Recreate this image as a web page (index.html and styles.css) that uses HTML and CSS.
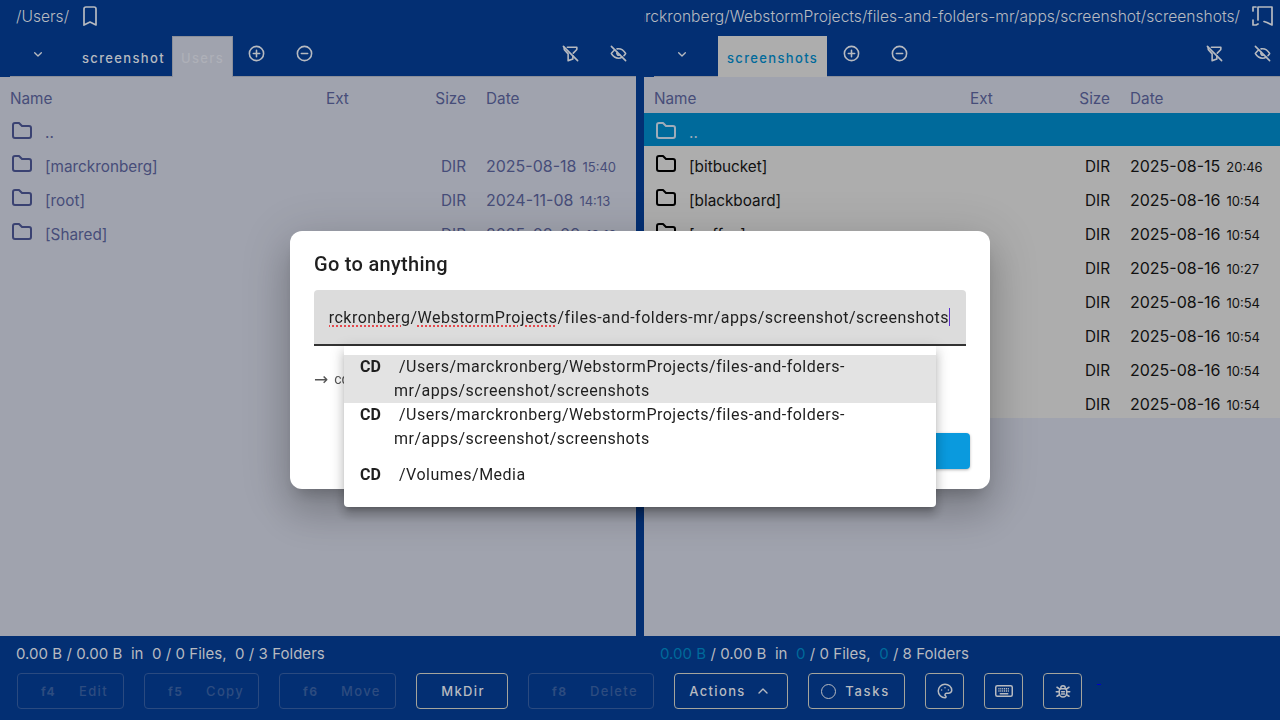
FILE: index.html
```html
<!DOCTYPE html>
<html>
<head>
<meta charset="utf-8">
<title>Go to anything</title>
<link rel="stylesheet" href="styles.css">
</head>
<body>
<svg class="sprite" width="0" height="0">
	<symbol id="folder" viewBox="0 0 24 24"><path d="M5 4h4l3 3h7a2 2 0 0 1 2 2v8a2 2 0 0 1-2 2h-14a2 2 0 0 1-2-2v-11a2 2 0 0 1 2-2"/></symbol>
	<symbol id="bookmark" viewBox="0 0 24 24"><path d="M6 5a2 2 0 0 1 2-2h8a2 2 0 0 1 2 2v16l-6-3-6 3z"/></symbol>
	<symbol id="bookmark-dash" viewBox="0 0 24 24"><path d="M2 7v-4h3M2 16v5h3l2-1"/><path d="M7 16v-13h14v18l-5-2.500-3-1"/></symbol>
	<symbol id="chevron-down" viewBox="0 0 24 24"><path d="M7 10l5 5 5-5"/></symbol>
	<symbol id="chevron-up" viewBox="0 0 24 24"><path d="M6 15l6-6 6 6"/></symbol>
	<symbol id="plus" viewBox="0 0 24 24"><circle cx="12" cy="12" r="9"/><path d="M8 12h8M12 8v8"/></symbol>
	<symbol id="minus" viewBox="0 0 24 24"><circle cx="12" cy="12" r="9"/><path d="M8 12h8"/></symbol>
	<symbol id="filter-off" viewBox="0 0 24 24"><path d="M8 4h12v2.172a2 2 0 0 1-.586 1.414l-3.914 3.914m-.5 3.500v4l-6 2v-8.500l-4.480-4.928a2 2 0 0 1-.520-1.345v-2.227"/><path d="M3 3l18 18"/></symbol>
	<symbol id="eye-off" viewBox="0 0 24 24"><path d="M10.585 10.587a2 2 0 0 0 2.829 2.828"/><path d="M16.681 16.673a8.717 8.717 0 0 1-4.681 1.327c-3.600 0-6.600-2-9-6 1.272-2.120 2.712-3.678 4.320-4.674m2.860-1.146a9.055 9.055 0 0 1 1.820-.180c3.600 0 6.600 2 9 6-.666 1.110-1.379 2.067-2.138 2.870"/><path d="M3 3l18 18"/></symbol>
	<symbol id="palette" viewBox="0 0 24 24"><path d="M12 21a9 9 0 0 1 0-18c4.970 0 9 3.582 9 8 0 1.060-.474 2.078-1.318 2.828-.844.750-1.989 1.172-3.182 1.172h-2.500a2 2 0 0 0-1 3.750 1.300 1.300 0 0 1-1 2.250"/><path d="M7.500 10.500v.01M12 7.500v.01M16.500 10.500v.01"/></symbol>
	<symbol id="keyboard" viewBox="0 0 24 24"><rect x="1" y="5" width="22" height="14" rx="2"/><path class="keys" d="M4.500 9h15M4.500 12h15"/><path d="M7 15.500h10"/></symbol>
	<symbol id="bug" viewBox="0 0 24 24"><path d="M9 9v-1a3 3 0 0 1 6 0v1"/><path d="M8 9h8a6 6 0 0 1 1 3v3a5 5 0 0 1-10 0v-3a6 6 0 0 1 1-3"/><path d="M3 13h4M17 13h4M10 13h4M10 16h4M4 19l3.350-2M20 19l-3.350-2M4 7l3.750 2.400M20 7l-3.750 2.400"/></symbol>
</svg>

<div class="panels">
	<section class="panel">
		<div class="path-row">
			<span class="path">/Users/</span>
			<svg class="icon bookmark"><use href="#bookmark"/></svg>
		</div>
		<div class="tab-row">
			<button class="tab-menu"><svg class="icon small"><use href="#chevron-down"/></svg></button>
			<span class="tab first">screenshot</span>
			<span class="tab active">Users</span>
			<button class="icon-btn"><svg class="icon"><use href="#plus"/></svg></button>
			<button class="icon-btn"><svg class="icon"><use href="#minus"/></svg></button>
			<span class="spacer"></span>
			<button class="icon-btn"><svg class="icon"><use href="#filter-off"/></svg></button>
			<button class="icon-btn last"><svg class="icon"><use href="#eye-off"/></svg></button>
		</div>
		<div class="table">
			<div class="row head"><span>Name</span><span>Ext</span><span class="size">Size</span><span class="date">Date</span></div>
			<div class="row up"><span class="name"><svg class="folder"><use href="#folder"/></svg>..</span></div>
			<div class="row"><span class="name"><svg class="folder"><use href="#folder"/></svg>[marckronberg]</span><span></span><span class="size">DIR</span><span class="date">2025-08-18<small>15:40</small></span></div>
			<div class="row"><span class="name"><svg class="folder"><use href="#folder"/></svg>[root]</span><span></span><span class="size">DIR</span><span class="date">2024-11-08<small>14:13</small></span></div>
			<div class="row"><span class="name"><svg class="folder"><use href="#folder"/></svg>[Shared]</span><span></span><span class="size">DIR</span><span class="date">2025-08-09<small>13:12</small></span></div>
		</div>
	</section>

	<section class="panel focused">
		<div class="path-row">
			<span class="path clip">/Users/marckronberg/WebstormProjects/files-and-folders-mr/apps/screenshot/screenshots/</span>
			<svg class="icon bookmark"><use href="#bookmark-dash"/></svg>
		</div>
		<div class="tab-row">
			<button class="tab-menu"><svg class="icon small"><use href="#chevron-down"/></svg></button>
			<span class="tab active">screenshots</span>
			<button class="icon-btn"><svg class="icon"><use href="#plus"/></svg></button>
			<button class="icon-btn"><svg class="icon"><use href="#minus"/></svg></button>
			<span class="spacer"></span>
			<button class="icon-btn"><svg class="icon"><use href="#filter-off"/></svg></button>
			<button class="icon-btn last"><svg class="icon"><use href="#eye-off"/></svg></button>
		</div>
		<div class="table">
			<div class="row head"><span>Name</span><span>Ext</span><span class="size">Size</span><span class="date">Date</span></div>
			<div class="row up cursor"><span class="name"><svg class="folder"><use href="#folder"/></svg>..</span></div>
			<div class="row"><span class="name"><svg class="folder"><use href="#folder"/></svg>[bitbucket]</span><span></span><span class="size">DIR</span><span class="date">2025-08-15<small>20:46</small></span></div>
			<div class="row"><span class="name"><svg class="folder"><use href="#folder"/></svg>[blackboard]</span><span></span><span class="size">DIR</span><span class="date">2025-08-16<small>10:54</small></span></div>
			<div class="row"><span class="name"><svg class="folder"><use href="#folder"/></svg>[coffee]</span><span></span><span class="size">DIR</span><span class="date">2025-08-16<small>10:54</small></span></div>
			<div class="row"><span class="name"></span><span></span><span class="size">DIR</span><span class="date">2025-08-16<small>10:27</small></span></div>
			<div class="row"><span class="name"></span><span></span><span class="size">DIR</span><span class="date">2025-08-16<small>10:54</small></span></div>
			<div class="row"><span class="name"></span><span></span><span class="size">DIR</span><span class="date">2025-08-16<small>10:54</small></span></div>
			<div class="row"><span class="name"></span><span></span><span class="size">DIR</span><span class="date">2025-08-16<small>10:54</small></span></div>
			<div class="row"><span class="name"></span><span></span><span class="size">DIR</span><span class="date">2025-08-16<small>10:54</small></span></div>
		</div>
	</section>
</div>

<div class="status">
	<div class="status-cell">0.00 B / 0.00 B &nbsp;in &nbsp;0 / 0 Files, &nbsp;0 / 3 Folders</div>
	<div class="status-cell"><em>0.00 B</em> / 0.00 B &nbsp;in &nbsp;<em>0</em> / 0 Files, &nbsp;<em>0</em> / 8 Folders</div>
</div>

<div class="buttons">
	<button class="btn off w-edit"><kbd>f4</kbd>Edit</button>
	<button class="btn off w-copy"><kbd>f5</kbd>Copy</button>
	<button class="btn off w-move"><kbd>f6</kbd>Move</button>
	<button class="btn w-mkdir">MkDir</button>
	<button class="btn off w-delete"><kbd>f8</kbd>Delete</button>
	<button class="btn w-actions">Actions<svg class="icon small up-arrow"><use href="#chevron-up"/></svg></button>
	<button class="btn w-tasks"><i class="ring"></i>Tasks</button>
	<button class="btn square"><svg class="icon tool"><use href="#palette"/></svg></button>
	<button class="btn square"><svg class="icon tool"><use href="#keyboard"/></svg></button>
	<button class="btn square"><svg class="icon tool"><use href="#bug"/></svg></button>
	<span class="stray"></span>
</div>

<div class="backdrop">
	<div class="dialog">
		<h2>Go to anything</h2>
		<div class="input">
			<div class="input-clip">
				<span class="input-text">/Users/ma<u>rckronberg</u>/<u>WebstormProjects</u>/files-and-folders-mr/apps/screenshot/screenshots</span><i class="caret"></i>
			</div>
		</div>
		<div class="hint"><span class="arrow">→</span> cd</div>
		<div class="actions"><button class="go">Go</button></div>
		<ul class="menu">
			<li class="hover"><b>CD</b>/Users/marckronberg/WebstormProjects/files-and-folders-mr/apps/screenshot/screenshots</li>
			<li><b>CD</b>/Users/marckronberg/WebstormProjects/files-and-folders-mr/apps/screenshot/screenshots</li>
			<li class="single"><b>CD</b>/Volumes/Media</li>
		</ul>
	</div>
</div>
</body>
</html>
```

FILE: styles.css
```css
* {
	box-sizing: border-box;
}

html, body {
	height: 100%;
}

body {
	margin: 0;
	overflow: hidden;
	background-color: #032f73;
	color: #b7bac0;
	font-family: Inter, "Liberation Sans", sans-serif;
	font-size: 16px;
	display: flex;
	flex-direction: column;
}

button {
	font-family: inherit;
	color: inherit;
	background: none;
	border: none;
	padding: 0;
}

.sprite {
	position: absolute;
}

.icon, .folder {
	fill: none;
	stroke: currentColor;
	stroke-width: 2;
	stroke-linecap: round;
	stroke-linejoin: round;
}

.keys {
	stroke-dasharray: 1.5 1;
	stroke-linecap: butt;
}

.icon {
	width: 19px;
	height: 19px;
	display: block;
}

.icon.small {
	width: 16px;
	height: 16px;
}

/* panels */
.panels {
	height: 636px;
	display: flex;
	gap: 8px;
}

.panel {
	flex: 1;
	min-width: 0;
	display: flex;
	flex-direction: column;
	overflow: hidden;
}

.path-row {
	height: 36px;
	padding: 0 8px 4px 16px;
	display: flex;
	align-items: center;
	gap: 9px;
}

.path {
	font-size: 15.6px;
	font-weight: 300;
	white-space: nowrap;
}

.path.clip {
	flex: 1;
	min-width: 0;
	display: flex;
	justify-content: flex-end;
	overflow: hidden;
}

.bookmark {
	width: 24px;
	height: 24px;
	stroke-width: 1.7;
}

.panel.focused .path-row {
	padding: 0 5px 4px 0;
	gap: 0;
}

.panel.focused .bookmark {
	margin-left: 11px;
}

.tab-row {
	height: 41px;
	display: flex;
	align-items: stretch;
	background: linear-gradient(#8b8f9a, #8b8f9a) 10px 100% / 100% 1px no-repeat;
}

.tab-menu {
	width: 73px;
	padding: 0 0 6px 3px;
	display: flex;
	align-items: center;
	justify-content: center;
	flex-shrink: 0;
}

.tab {
	padding: 7px 9px 0;
	font-size: 13px;
	font-weight: 500;
	letter-spacing: 1.35px;
	line-height: 30px;
	white-space: nowrap;
}

.tab.first {
	margin-right: -2px;
}

.tab.active {
	margin-right: -1px;
	padding: 6px 8px 0;
	background-color: #a0a3ae;
	border: 1px solid #8b8f9a;
	border-bottom: none;
	color: #aeb0b8;
}

.panel.focused .tab {
	width: 109px;
	margin: 0 0 0 1px;
	padding: 7px 9px 0;
	border: none;
	background-color: #adadad;
	color: #006a9b;
}

.icon-btn {
	width: 48px;
	padding-bottom: 6px;
	display: flex;
	align-items: center;
	justify-content: center;
	flex-shrink: 0;
}

.icon-btn.last {
	margin-right: -6px;
}

.spacer {
	flex: 1;
}

.table {
	flex: 1;
	background-color: #a0a3ae;
	color: #474d79;
}

.row {
	height: 34px;
	padding: 6px 0 0 10px;
	display: grid;
	grid-template-columns: 316px 80px 60px 1fr;
	align-items: center;
	font-size: 15.3px;
	white-space: nowrap;
}

.row.head {
	height: 36px;
	padding-top: 7px;
}

.row.up {
	height: 33px;
}

.size {
	text-align: right;
}

.date {
	padding-left: 20px;
	font-size: 16px;
}

.date small {
	margin-left: 6px;
	font-size: 13px;
}

.row.head .date {
	font-size: 15.3px;
}

.name {
	display: flex;
	align-items: center;
}

.folder {
	width: 24px;
	height: 24px;
	margin-right: 11px;
	margin-top: -4px;
	flex-shrink: 0;
	color: #3a4272;
}

.panel.focused .row {
	background-color: #adadad;
	color: #111;
}

.panel.focused .folder {
	color: #000;
}

.panel.focused .row.head {
	background-color: #a0a3ae;
	color: #474d79;
}

.panel.focused .row.cursor {
	background-color: #006a9b;
	color: #a0acb9;
}

.panel.focused .row.cursor .folder {
	color: #a0acb9;
}

/* footer */
.status {
	height: 37px;
	padding-top: 1px;
	display: flex;
	gap: 8px;
	font-size: 15px;
	letter-spacing: 0.04px;
	line-height: 34px;
}

.status-cell {
	flex: 1;
	padding-left: 16px;
}

.status em {
	font-style: normal;
	color: #006a9b;
}

.buttons {
	padding-left: 17px;
	display: flex;
	gap: 20px;
	align-items: flex-start;
}

.btn {
	height: 36px;
	display: flex;
	align-items: center;
	justify-content: center;
	border: 1px solid #a4a49c;
	border-radius: 4px;
	font-size: 13px;
	font-weight: 500;
	letter-spacing: 1.35px;
	color: #b7bac0;
}

.btn.off {
	border-color: #2a4a80;
	color: #2d4c80;
	justify-content: flex-start;
	padding-left: 23px;
}

.btn kbd {
	width: 38px;
	font-family: inherit;
	font-size: 12px;
	font-weight: 700;
	text-align: left;
}

.w-edit { width: 107px; }
.w-copy { width: 115px; }
.w-move { width: 117px; }
.w-mkdir { width: 92px; padding-left: 2px; }
.w-delete { width: 126px; }
.w-actions { width: 114px; padding-right: 2px; }
.w-tasks { width: 97px; padding-right: 2px; letter-spacing: 1.7px; }

.square {
	width: 39px;
}

.up-arrow {
	margin-left: 9px;
}

.tool {
	width: 18px;
	height: 18px;
}

.ring {
	width: 15px;
	height: 15px;
	margin-right: 9px;
	border: 1.5px solid #b7bac0;
	border-radius: 50%;
}

.stray {
	width: 4px;
	height: 1px;
	margin: 11px 0 0 -5px;
	background-color: #0000cc;
}

/* dialog */
.backdrop {
	position: fixed;
	inset: 0;
	display: flex;
	align-items: center;
	justify-content: center;
}

.dialog {
	position: relative;
	width: 700px;
	height: 258px;
	padding: 20px 24px 0;
	background-color: #fff;
	border-radius: 12px;
	font-family: Roboto, "Liberation Sans", sans-serif;
	color: #1f1f1f;
	box-shadow: 0 11px 15px -7px rgba(0,0,0,.2), 0 24px 38px 3px rgba(0,0,0,.14), 0 9px 46px 8px rgba(0,0,0,.12);
}

.dialog h2 {
	margin: 0 0 13px;
	font-size: 20px;
	font-weight: 500;
	line-height: 26px;
	letter-spacing: 0.3px;
}

.input {
	height: 56px;
	padding: 0 16px 0 15px;
	display: flex;
	align-items: center;
	background-color: #dcdcdc;
	border-bottom: 2px solid #333;
	border-radius: 4px 4px 0 0;
	font-size: 16px;
	letter-spacing: 0.5px;
	white-space: nowrap;
}

.input-clip {
	flex: 1;
	min-width: 0;
	height: 30px;
	display: flex;
	align-items: center;
	justify-content: flex-end;
	overflow: hidden;
}

.input-text {
	flex-shrink: 0;
}

.input u {
	text-decoration: underline dotted #e5484d 1.5px;
	text-underline-offset: 3px;
}

.caret {
	width: 1px;
	height: 18px;
	flex-shrink: 0;
	background-color: #5b2fd0;
}

.hint {
	height: 18px;
	margin-top: 24px;
	display: flex;
	align-items: center;
	gap: 6px;
	font-size: 14px;
	color: #555;
}

.arrow {
	font-family: "DejaVu Sans", sans-serif;
	font-size: 17px;
}

.actions {
	margin: 45px -4px 0 0;
	display: flex;
	justify-content: flex-end;
}

.go {
	width: 200px;
	height: 36px;
	border-radius: 4px;
	background-color: #0a9ade;
	color: #fff;
	box-shadow: 0 1px 3px rgba(0,0,0,.3);
}

.menu {
	position: absolute;
	top: 115px;
	left: 54px;
	width: 592px;
	height: 161px;
	margin: 0;
	padding: 9px 0 0;
	list-style: none;
	background-color: #fff;
	border-radius: 0 0 4px 4px;
	font-size: 16px;
	line-height: 24px;
	letter-spacing: 0.5px;
	box-shadow: 0 5px 5px -3px rgba(0,0,0,.2), 0 8px 10px 1px rgba(0,0,0,.14), 0 3px 14px 2px rgba(0,0,0,.12);
}

.menu li {
	height: 48px;
	padding: 0 40px 0 50px;
}

.menu li.hover {
	background-color: #e3e3e3;
}

.menu li.single {
	line-height: 48px;
}

.menu b {
	display: inline-block;
	width: 39px;
	margin-left: -34px;
	letter-spacing: 0;
}
```
